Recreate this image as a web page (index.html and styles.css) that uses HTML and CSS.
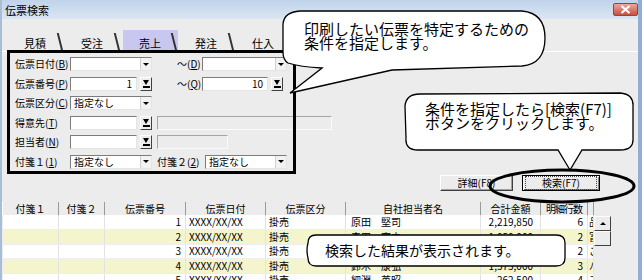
FILE: index.html
```html
<!DOCTYPE html>
<html lang="ja">
  <head>
    <meta charset="UTF-8" />
    <title>伝票検索</title>
    <link rel="stylesheet" href="styles.css">
  </head>
  <body>
    <div class="window">
      <div class="titlebar">
        <span class="title">伝票検索</span>
        <span class="close">
          <svg width="11" height="9" viewBox="0 0 11 9"><path d="M1.5 1 L9.5 8 M9.5 1 L1.5 8" stroke="#fff" stroke-width="2.2"/></svg>
        </span>
      </div>

      <div class="client">
        <div class="tabs">
          <div class="tab">見積</div>
          <div class="tab">受注</div>
          <div class="tab active">売上</div>
          <div class="tab">発注</div>
          <div class="tab">仕入</div>
        </div>

        <!-- search conditions -->
        <div class="cond">
          <div class="row">
            <span class="lbl">伝票日付(<u>B</u>)</span>
            <span class="combo"><span class="val"></span><span class="arr"></span></span>
            <span class="lbl tilde">～(<u>D</u>)</span>
            <span class="combo wide"><span class="val"></span><span class="arr"></span></span>
          </div>
          <div class="row">
            <span class="lbl">伝票番号(<u>P</u>)</span>
            <span class="field num">1</span>
            <span class="pick"></span>
            <span class="lbl tilde">～(<u>Q</u>)</span>
            <span class="field num short">10</span>
            <span class="pick"></span>
          </div>
          <div class="row">
            <span class="lbl">伝票区分(<u>C</u>)</span>
            <span class="combo"><span class="val">指定なし</span><span class="arr"></span></span>
          </div>
          <div class="row">
            <span class="lbl">得意先(<u>T</u>)</span>
            <span class="field"></span>
            <span class="pick"></span>
            <span class="field off long"></span>
          </div>
          <div class="row">
            <span class="lbl">担当者(<u>N</u>)</span>
            <span class="field"></span>
            <span class="pick"></span>
            <span class="field off mid"></span>
          </div>
          <div class="row">
            <span class="lbl">付箋１(<u>1</u>)</span>
            <span class="combo"><span class="val">指定なし</span><span class="arr"></span></span>
            <span class="lbl second">付箋２(<u>2</u>)</span>
            <span class="combo"><span class="val">指定なし</span><span class="arr"></span></span>
          </div>
        </div>

        <div class="actions">
          <button class="btn detail">詳細(F8)</button>
          <button class="btn default"><span>検索(F7)</span></button>
        </div>

        <!-- result list -->
        <div class="result">
          <table class="grid">
            <colgroup>
              <col style="width:56px"><col style="width:46px"><col style="width:81px">
              <col style="width:80px"><col style="width:80px"><col style="width:135px">
              <col style="width:60px"><col style="width:47px"><col style="width:6px">
            </colgroup>
            <thead>
              <tr>
                <th>付箋１</th><th>付箋２</th><th>伝票番号</th><th>伝票日付</th><th>伝票区分</th>
                <th>自社担当者名</th><th>合計金額</th><th class="tight">明細行数</th><th></th>
              </tr>
            </thead>
            <tbody>
              <tr>
                <td></td><td></td><td class="r">1</td><td>XXXX/XX/XX</td><td>掛売</td>
                <td class="name">原田　堅司</td><td class="r amt">2,219,850</td><td class="r">6</td><td class="cut">品</td>
              </tr>
              <tr class="alt">
                <td></td><td></td><td class="r">2</td><td>XXXX/XX/XX</td><td>掛売</td>
                <td class="name">森田　寛之</td><td class="r amt">1,050,000</td><td class="r">2</td><td class="cut">富</td>
              </tr>
              <tr>
                <td></td><td></td><td class="r">3</td><td>XXXX/XX/XX</td><td>掛売</td>
                <td class="name">山本　和夫</td><td class="r amt">1,837,500</td><td class="r">2</td><td class="cut">こ</td>
              </tr>
              <tr class="alt">
                <td></td><td></td><td class="r">4</td><td>XXXX/XX/XX</td><td>掛売</td>
                <td class="name">鈴木　康弘</td><td class="r amt">1,575,000</td><td class="r">3</td><td class="cut">ﾉ</td>
              </tr>
              <tr>
                <td></td><td></td><td class="r">5</td><td>XXXX/XX/XX</td><td>掛売</td>
                <td class="name">細淵　英昭</td><td class="r amt">262,500</td><td class="r">4</td><td class="cut">ヨ</td>
              </tr>
            </tbody>
          </table>
          <div class="vscroll">
            <span class="sb-btn"></span>
            <span class="sb-thumb"></span>
          </div>
        </div>
      </div>

      <!-- annotations drawn over the screen -->
      <div class="mark-box"></div>
      <svg class="marks" width="636" height="280" viewBox="2 0 636 280">
        <path d="M290 93 L322 68 Q300 67 288 63 Q283 60 283 52 L283 24 Q284 12 300 11 L522 11 Q545 13 545 38 Q545 64 522 66 L392 70 Z" />
        <path d="M570 170 L558 150 L418 150 Q405 150 406 138 L405 106 Q406 94 420 94 L620 93 Q634 94 633 107 L633 138 Q634 150 620 150 L582 150 Z" />
        <path d="M316 235 L556 235 Q565 235 565 243 L565 258 Q565 266 556 266 L316 266 Q308 266 308 258 Q306 250 308 243 Q308 235 316 235 Z" />
        <ellipse class="ring" cx="562" cy="186" rx="72" ry="16" />
      </svg>
      <div class="note note-1">印刷したい伝票を特定するための<br>条件を指定します。</div>
      <div class="note note-2">条件を指定したら[検索(F7)]<br>ボタンをクリックします。</div>
      <div class="note note-3">検索した結果が表示されます。</div>
    </div>
  </body>
</html>
```

FILE: styles.css
```css
* {
  box-sizing: border-box;
}

body {
  margin: 0;
  font-family: "Noto Sans CJK JP", "Noto Sans", sans-serif;
  color: #000;
}

.window {
  position: relative;
  width: 642px;
  height: 280px;
  overflow: hidden;
  background: #ececec;
  border-left: 2px solid #a9bdd6;
  border-right: 4px solid #8eafd6;
}

.titlebar {
  display: flex;
  align-items: center;
  height: 19px;
  padding-left: 3px;
  background: linear-gradient(#c0d3ea, #dbe6f3);
  font-size: 11px;
}

.close {
  display: flex;
  align-items: center;
  justify-content: center;
  margin-left: auto;
  width: 25px;
  height: 13px;
  border: 1px solid #9a433a;
  border-radius: 2px;
  background: linear-gradient(#eaa89b, #c9503f);
}

.client {
  padding-top: 11px;
}

/* Tabs */
.tabs {
  display: flex;
  height: 22px;
  padding-left: 4.5px;
  border-bottom: 1px solid #fff;
}

.tab {
  position: relative;
  width: 57px;
  padding-top: 7px;
  font-size: 11px;
  line-height: 12px;
  text-align: center;
}

.tab::after {
  content: "";
  position: absolute;
  right: 3px;
  top: 3px;
  width: 1.5px;
  height: 18px;
  background: #333;
  transform: skewX(14deg);
}

.tab.active {
  background: #c7c7ef;
  margin-left: 2px;
  width: 55px;
}

/* Conditions */
.cond {
  display: flex;
  flex-direction: column;
  gap: 5.5px;
  height: 122px;
  padding: 5px 0 0 13px;
}

.row {
  display: flex;
  align-items: center;
  height: 14px;
  font-size: 10px;
  line-height: 12px;
}

.lbl {
  width: 55px;
  white-space: nowrap;
}

.lbl.tilde {
  width: 25px;
  margin-left: 25px;
}

.lbl.second {
  width: 48px;
  margin-left: 5px;
}

.combo {
  display: flex;
  width: 82px;
  height: 14px;
  background: #fff;
  border: 1px solid;
  border-color: #7c7c7c #e4e4e4 #e4e4e4 #7c7c7c;
}

.combo.wide {
  width: 85px;
}

.combo .val {
  flex: 1;
  padding-left: 3px;
}

.combo .arr {
  display: flex;
  align-items: center;
  justify-content: center;
  width: 11px;
  background: #f2f2f2;
  border-left: 1px solid #d0d0d0;
}

.combo .arr::before {
  content: "";
  border-left: 3px solid transparent;
  border-right: 3px solid transparent;
  border-top: 3px solid #000;
}

.field {
  width: 67px;
  height: 14px;
  background: #fff;
  border: 1px solid;
  border-color: #7c7c7c #e4e4e4 #e4e4e4 #7c7c7c;
}

.field.num {
  padding-right: 4px;
  text-align: right;
}

.field.short {
  width: 66px;
}

.field.off {
  margin-left: 5px;
  background: #ececec;
  border-color: #a6a6a6 #fafafa #fafafa #a6a6a6;
}

.field.long {
  width: 175px;
}

.field.mid {
  width: 71px;
}

.pick {
  display: flex;
  flex-direction: column;
  align-items: center;
  justify-content: center;
  gap: 1px;
  width: 12px;
  height: 14px;
  margin-left: 3px;
  background: #ececec;
  border: 1px solid;
  border-color: #fff #404040 #404040 #fff;
}

.pick::before {
  content: "";
  border-left: 3.5px solid transparent;
  border-right: 3.5px solid transparent;
  border-top: 5px solid #000;
}

.pick::after {
  content: "";
  width: 7px;
  height: 2px;
  background: #000;
}

/* Buttons */
.actions {
  display: flex;
  justify-content: flex-end;
  gap: 9px;
  height: 16px;
  margin-top: 1px;
  padding-right: 38px;
}

.btn {
  height: 16px;
  padding: 0;
  font-family: inherit;
  font-size: 10px;
  line-height: 12px;
  background: #ececec;
  border: 1px solid;
  border-color: #fff #404040 #404040 #fff;
  box-shadow: inset -1px -1px #a0a0a0;
}

.btn.detail {
  width: 73px;
}

.btn.default {
  width: 78px;
  border-color: #000;
  box-shadow: inset 1px 1px #fff, inset -1px -1px #808080;
}

.btn.default span {
  display: block;
  margin: 0 2px;
  border: 1px dotted #444;
}

/* Result list */
.result {
  display: flex;
  margin-top: 11px;
}

.grid {
  width: 591px;
  table-layout: fixed;
  border-collapse: collapse;
  font-size: 10px;
  line-height: 12px;
}

.grid th {
  height: 13px;
  padding: 0;
  font-weight: normal;
  background: #ececec;
  border-left: 1px solid #fff;
  border-right: 1px solid #9a9a9a;
  white-space: nowrap;
  overflow: hidden;
}

.grid th.tight {
  letter-spacing: -1px;
}

.grid td {
  height: 14.5px;
  padding: 0 3px;
  background: #fff;
  border-right: 1px solid #e2e2e2;
  border-bottom: 1px solid #eeeeee;
  white-space: nowrap;
  overflow: hidden;
}

.grid tr.alt td {
  background: #f5f5cd;
}

.grid td.r {
  text-align: right;
  padding-right: 4px;
}

.grid td.amt {
  padding-right: 7px;
}

.grid td.name {
  padding-left: 5px;
}

.grid td.cut {
  padding: 0 0 0 1px;
  text-overflow: clip;
}

.vscroll {
  display: flex;
  flex-direction: column;
  width: 17px;
  padding-top: 14px;
}

.sb-btn,
.sb-thumb {
  display: flex;
  align-items: center;
  justify-content: center;
  height: 15px;
  background: #ececec;
  border: 1px solid;
  border-color: #fff #404040 #404040 #fff;
}

.sb-btn::before {
  content: "";
  border-left: 3px solid transparent;
  border-right: 3px solid transparent;
  border-bottom: 3px solid #000;
}

/* Annotations */
.mark-box {
  position: absolute;
  left: 5px;
  top: 50px;
  width: 289px;
  height: 124px;
  border: 3px solid #000;
}

.marks {
  position: absolute;
  left: 0;
  top: 0;
}

.marks path {
  fill: #fff;
  stroke: #000;
  stroke-width: 1.3;
}

.marks .ring {
  fill: none;
  stroke: #000;
  stroke-width: 3;
}

.note {
  position: absolute;
  font-size: 15px;
  line-height: 13.5px;
  white-space: nowrap;
}

.note-1 {
  left: 302px;
  top: 22px;
}

.note-2 {
  left: 423px;
  top: 102px;
}

.note-3 {
  left: 323px;
  top: 244px;
  font-size: 14px;
}
```
